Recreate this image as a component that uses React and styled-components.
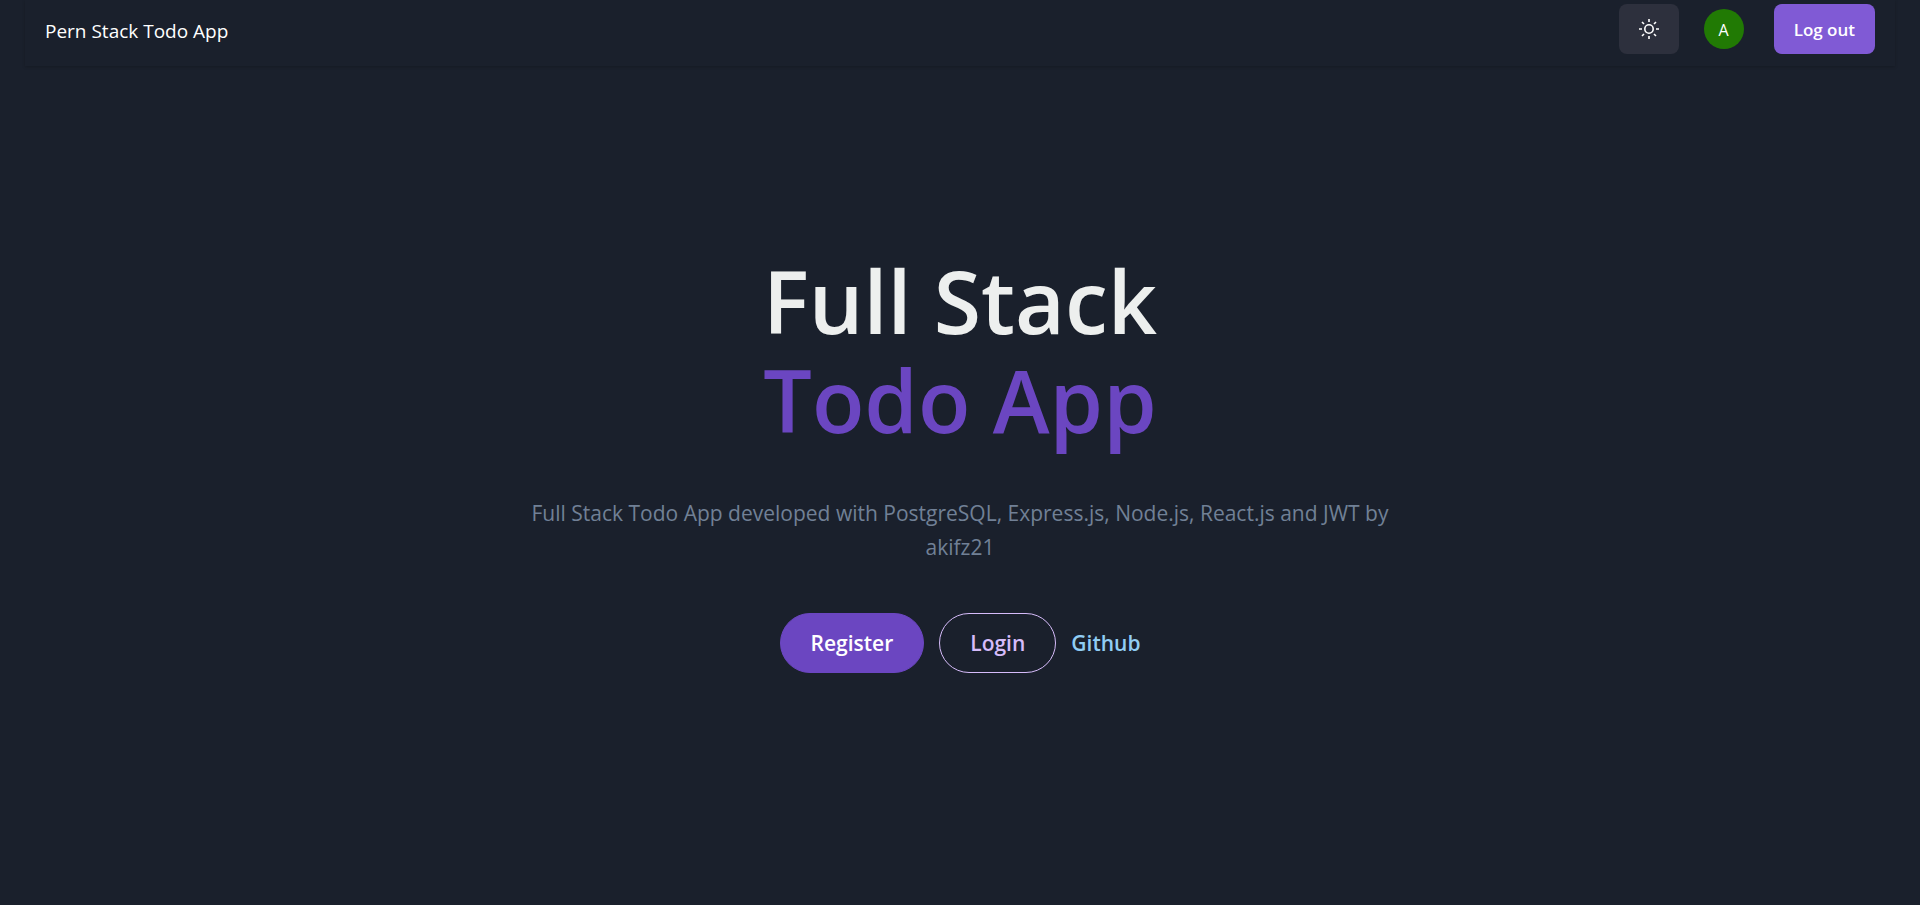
import React from "react";
import styled, { createGlobalStyle } from "styled-components";

const GlobalStyle = createGlobalStyle`
  *, *::before, *::after {
    box-sizing: border-box;
  }
  body {
    margin: 0;
    background: #1a202c;
    color: #ffffff;
    font-family: "Segoe UI", "Open Sans", "Noto Sans", sans-serif;
    line-height: 30px;
  }
`;

const Page = styled.div`
  min-height: 100vh;
  padding: 0 25px;
`;

const NavBar = styled.header`
  display: flex;
  align-items: center;
  justify-content: space-between;
  padding: 4px 20px 12px;
  box-shadow: 0 1px 3px rgba(0, 0, 0, 0.2);
`;

const Brand = styled.a`
  padding-top: 4px;
  color: #ffffff;
  font-size: 19px;
  text-decoration: none;
`;

const Actions = styled.nav`
  display: flex;
  align-items: center;
`;

const NavButton = styled.button`
  display: inline-flex;
  align-items: center;
  justify-content: center;
  height: 50px;
  padding: ${(p) => (p.$primary ? "2px 20px 0" : "0 20px")};
  border: 0;
  border-radius: 8px;
  background: ${(p) => (p.$primary ? "#805ad5" : "#2d303d")};
  color: #ffffff;
  font: inherit;
  font-size: 17px;
  font-weight: 600;
  cursor: pointer;
`;

const Avatar = styled.span`
  display: flex;
  align-items: center;
  justify-content: center;
  width: 40px;
  height: 40px;
  margin: 0 30px 0 25px;
  padding-top: 2px;
  border-radius: 50%;
  background: #217a04;
  font-size: 16px;
`;

const Hero = styled.main`
  display: flex;
  flex-direction: column;
  align-items: center;
  gap: 47px;
  max-width: 920px;
  margin: 0 auto;
  padding: 185px 0 100px;
  text-align: center;
`;

const Title = styled.h1`
  margin: 0;
  color: #edefee;
  font-size: 86px;
  font-weight: 600;
  line-height: 99px;
`;

const Accent = styled.span`
  display: block;
  color: #6b46c1;
`;

const Lead = styled.p`
  margin: 0;
  color: #718096;
  font-size: 21px;
  line-height: 34px;
`;

const Links = styled.div`
  display: flex;
  align-items: center;
  gap: 15px;
  margin-top: 2px;
`;

const PillButton = styled.button`
  height: 60px;
  padding: 0 30px;
  border: 1px solid ${(p) => (p.$outline ? "#d6bcfa" : "#6b46c1")};
  border-radius: 30px;
  background: ${(p) => (p.$outline ? "transparent" : "#6b46c1")};
  color: ${(p) => (p.$outline ? "#d6bcfa" : "#ffffff")};
  font: inherit;
  font-size: 21px;
  font-weight: 600;
  cursor: pointer;
`;

const TextLink = styled.a`
  color: #90cdf4;
  font-size: 21px;
  font-weight: 600;
  text-decoration: none;
`;

function SunIcon() {
  return (
    <svg width="20" height="20" viewBox="0 0 20 20" fill="none" stroke="currentColor" strokeWidth="1.6" aria-hidden="true">
      <circle cx="10" cy="10" r="4.2" />
      <path d="M10 0v3M10 17v3M0 10h3M17 10h3M3 3l2 2M15 15l2 2M3 17l2-2M15 5l2-2" />
    </svg>
  );
}

export default function App() {
  return (
    <>
      <GlobalStyle />
      <Page>
        <NavBar>
          <Brand href="#">Pern Stack Todo App</Brand>
          <Actions>
            <NavButton type="button" aria-label="Toggle color mode">
              <SunIcon />
            </NavButton>
            <Avatar>A</Avatar>
            <NavButton type="button" $primary>Log out</NavButton>
          </Actions>
        </NavBar>
        <Hero>
          <Title>
            Full Stack
            <Accent>Todo App</Accent>
          </Title>
          <Lead>
            Full Stack Todo App developed with PostgreSQL, Express.js, Node.js, React.js and JWT by akifz21
          </Lead>
          <Links>
            <PillButton type="button">Register</PillButton>
            <PillButton type="button" $outline>Login</PillButton>
            <TextLink href="#">Github</TextLink>
          </Links>
        </Hero>
      </Page>
    </>
  );
}
